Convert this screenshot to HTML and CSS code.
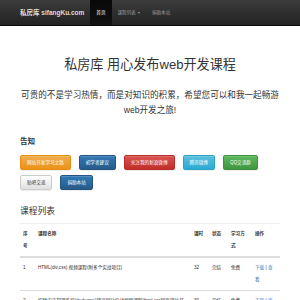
FILE: index.html
```html
<!DOCTYPE html>
<html lang="en">
<head>
	<meta charset="UTF-8" />
	<meta name="viewport" content="width=device-width, initial-scale=1.0" />
	<title>私房库 sifangKu.com</title>
	<link rel="stylesheet" href="styles.css">
</head>
<body>
	<nav class="navbar">
		<a class="brand" href="#">私房库 sifangKu.com</a>
		<ul class="nav">
			<li class="active"><a href="#">首页</a></li>
			<li><a href="#">课程列表<span class="caret"></span></a></li>
			<li><a href="#">捐助本站</a></li>
		</ul>
	</nav>

	<main class="container">
		<header class="hero">
			<h1>私房库 用心发布web开发课程</h1>
			<p class="lead">可贵的不是学习热情，而是对知识的积累，希望您可以和我一起畅游<br>web开发之旅!</p>
		</header>

		<h2 class="notice-title">告知</h2>
		<div class="btn-row">
			<a class="btn btn-warning" href="#">网站开发学习之路</a>
			<a class="btn btn-primary" href="#">初学者建议</a>
			<a class="btn btn-danger" href="#">关注我的新浪微博</a>
			<a class="btn btn-info" href="#">腾讯微博</a>
			<a class="btn btn-success" href="#">QQ交流群</a>
		</div>
		<div class="btn-row">
			<a class="btn btn-default" href="#">贴吧交流</a>
			<a class="btn btn-primary" href="#">捐助本站</a>
		</div>

		<h2 class="list-title">课程列表</h2>
		<table class="courses">
			<colgroup>
				<col class="c-no">
				<col class="c-name">
				<col class="c-hours">
				<col class="c-state">
				<col class="c-mode">
				<col class="c-ops">
			</colgroup>
			<thead>
				<tr>
					<th>序号</th>
					<th>课程名称</th>
					<th>课时</th>
					<th>状态</th>
					<th>学习方式</th>
					<th>操作</th>
				</tr>
			</thead>
			<tbody>
				<tr>
					<td>1</td>
					<td>HTML(div,css) 视频课程(附多个实战项目)</td>
					<td>32</td>
					<td>完结</td>
					<td>免费</td>
					<td><a href="#">下载</a> | <a href="#">查看</a></td>
				</tr>
				<tr>
					<td>2</td>
					<td>织梦内容管理系统(dedecms)建设网站实战视频课程(html,css网页建站基础)</td>
					<td>30</td>
					<td>完结</td>
					<td>免费</td>
					<td><a href="#">下载</a> | <a href="#">查看</a></td>
				</tr>
			</tbody>
		</table>
	</main>
</body>
</html>
```

FILE: styles.css
```css
*,
*:after,
*:before {
	box-sizing: border-box;
}

body {
	margin: 0;
	font-family: 'Liberation Sans', 'Noto Sans CJK SC', sans-serif;
	font-size: 4.6px;
	line-height: 12px;
	color: #333;
	background: #fff;
}

a {
	text-decoration: none;
	color: #337ab7;
}

/* navbar */
.navbar {
	display: flex;
	align-items: stretch;
	height: 26px;
	padding-left: 20px;
	background: linear-gradient(#3c3c3c, #222);
	border-bottom: 1px solid #080808;
}

.brand {
	display: flex;
	align-items: center;
	padding-right: 6px;
	font-size: 6.5px;
	font-weight: bold;
	color: #dcdcdc;
}

.nav {
	display: flex;
	list-style: none;
	margin: 0;
	padding: 0;
}

.nav a {
	display: flex;
	align-items: center;
	height: 100%;
	padding: 0 6px;
	color: #9d9d9d;
}

.nav .active a {
	color: #fff;
	background: linear-gradient(#080808, #111);
}

.caret {
	margin-left: 2px;
	border-top: 2px solid #9d9d9d;
	border-left: 1.5px solid transparent;
	border-right: 1.5px solid transparent;
}

/* content */
.container {
	padding: 0 20px;
}

.hero {
	text-align: center;
	padding-top: 29px;
}

.hero h1 {
	margin: 0;
	font-size: 13.1px;
	line-height: 20px;
	font-weight: normal;
}

.lead {
	margin: 13px -2px 0;
	font-size: 8.6px;
	line-height: 15px;
}

.notice-title {
	margin: 18px 0 7px;
	font-size: 7.5px;
	line-height: 12px;
}

.btn-row {
	display: flex;
	gap: 8px;
	margin-bottom: 5px;
}

.btn {
	display: flex;
	align-items: center;
	height: 15px;
	padding: 0 6px;
	border-radius: 2px;
	border: 1px solid;
	color: #fff;
	box-shadow: inset 0 1px 0 rgba(255, 255, 255, .15), 0 1px 1px rgba(0, 0, 0, .075);
}

.btn-warning {
	background: linear-gradient(#f0ad4e, #eb9316);
	border-color: #e38d13;
}

.btn-primary {
	background: linear-gradient(#337ab7, #265a88);
	border-color: #245580;
}

.btn-danger {
	background: linear-gradient(#d9534f, #c12e2a);
	border-color: #b92c28;
}

.btn-info {
	background: linear-gradient(#5bc0de, #2aabd2);
	border-color: #28a4c9;
}

.btn-success {
	background: linear-gradient(#5cb85c, #419641);
	border-color: #3e8f3e;
}

.btn-default {
	color: #333;
	background: linear-gradient(#fff, #e0e0e0);
	border-color: #ccc;
}

.list-title {
	margin: 14px 0 5px;
	font-size: 8.75px;
	line-height: 14px;
	font-weight: normal;
}

/* table */
.courses {
	width: 260px;
	table-layout: fixed;
	border-collapse: collapse;
	border-top: 1px solid #eee;
}

.c-no { width: 15px; }
.c-name { width: 156px; }
.c-hours { width: 18px; }
.c-state { width: 19px; }
.c-mode { width: 24px; }
.c-ops { width: 28px; }

.courses th,
.courses td {
	padding: 4px 3px;
	text-align: left;
	vertical-align: top;
}

.courses th {
	border-bottom: 2px solid #ddd;
}

.courses td {
	height: 31px;
	border-top: 1px solid #ddd;
}

.courses td:last-child {
	padding-right: 4px;
}
```
